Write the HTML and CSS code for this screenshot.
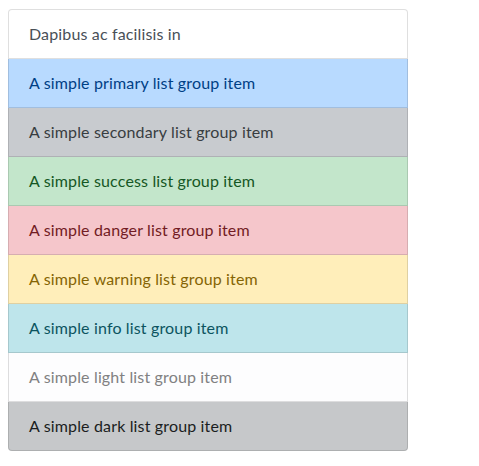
FILE: index.html
```html
<!DOCTYPE html>
<html>
<head>
<meta charset="utf-8">
<link rel="stylesheet" href="styles.css">
</head>
<body>
<ul class="list-group">
  <li class="item">Dapibus ac facilisis in</li>
  <li class="item item-primary">A simple primary list group item</li>
  <li class="item item-secondary">A simple secondary list group item</li>
  <li class="item item-success">A simple success list group item</li>
  <li class="item item-danger">A simple danger list group item</li>
  <li class="item item-warning">A simple warning list group item</li>
  <li class="item item-info">A simple info list group item</li>
  <li class="item item-light">A simple light list group item</li>
  <li class="item item-dark">A simple dark list group item</li>
</ul>
</body>
</html>
```

FILE: styles.css
```css
html, body {
  background: #fff;
}
body {
  margin: 9px 8px 8px 8px;
  font-family: "Lato", "Liberation Sans", sans-serif;
  font-size: 16px;
  line-height: 24px;
  letter-spacing: 0.15px;
  color: #495057;
}
.list-group {
  width: 400px;
  margin: 0;
  padding: 0;
  list-style: none;
  display: flex;
  flex-direction: column;
}
.item {
  padding: 12px 20px;
  background: #fff;
  border: 1px solid rgba(0, 0, 0, 0.125);
}
.item + .item {
  border-top-width: 0;
}
.item:first-child {
  border-top-left-radius: 4px;
  border-top-right-radius: 4px;
}
.item:last-child {
  border-bottom-left-radius: 4px;
  border-bottom-right-radius: 4px;
}
.item-primary { color: #004085; background: #b8daff; }
.item-secondary { color: #383d41; background: #c8cbcf; }
.item-success { color: #155724; background: #c3e6cb; }
.item-danger { color: #721c24; background: #f5c6cb; }
.item-warning { color: #856404; background: #ffeeba; }
.item-info { color: #0c5460; background: #bee5eb; }
.item-light { color: #818182; background: #fdfdfe; }
.item-dark { color: #1b1e21; background: #c6c8ca; }
```
